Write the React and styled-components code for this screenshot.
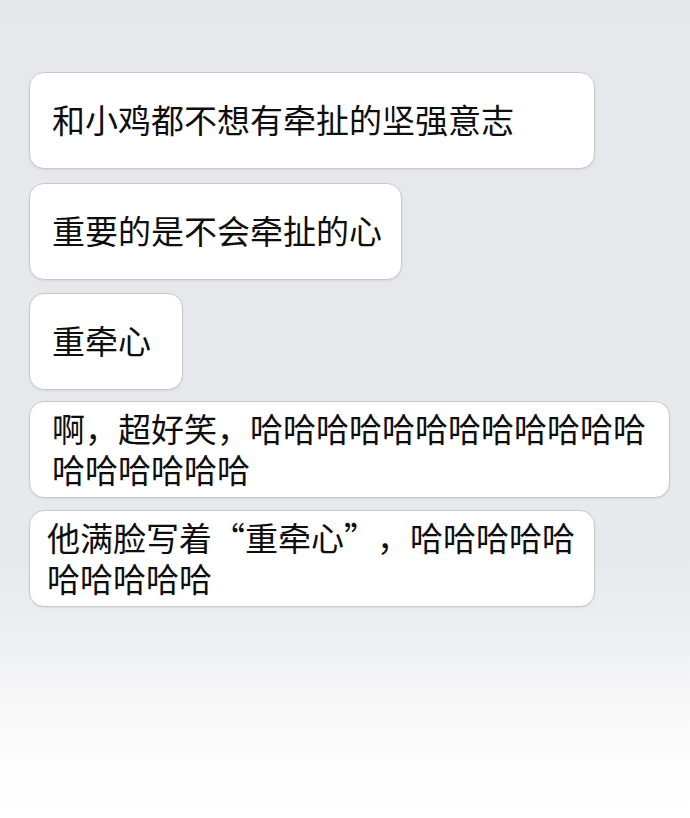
import React from "react";
import styled, { createGlobalStyle } from "styled-components";

const GlobalStyle = createGlobalStyle`
  html, body {
    margin: 0;
    padding: 0;
  }
  body {
    font-family: "Noto Sans CJK SC", "Noto Sans", sans-serif;
    background: #ffffff;
  }
`;

const Page = styled.main`
  box-sizing: border-box;
  width: 690px;
  min-height: 818px;
  padding: 72px 0 0 29px;
  display: flex;
  flex-direction: column;
  align-items: flex-start;
  background: linear-gradient(
    to bottom,
    #e6e7eb 0px,
    #e8e9ec 560px,
    #eeeff1 640px,
    #f7f7f8 700px,
    #fcfcfc 760px,
    #ffffff 818px
  );
`;

const Bubble = styled.div`
  box-sizing: border-box;
  width: ${(p) => p.$w}px;
  min-height: 97px;
  margin-top: ${(p) => p.$mt || 0}px;
  padding: 0 12px 0 ${(p) => p.$pl || 22}px;
  display: flex;
  align-items: center;
  background: #ffffff;
  border: 1px solid #c9c9cb;
  border-radius: 15px;
  box-shadow: 0 1px 2px rgba(0, 0, 0, 0.08);
`;

const Text = styled.p`
  margin: 0;
  margin-top: -2px;
  font-family: "Noto Sans CJK SC", sans-serif;
  font-size: 33px;
  line-height: 41px;
  color: #0e0e0e;
  white-space: pre-line;
  letter-spacing: 0;
  text-spacing-trim: space-all;
`;

const messages = [
  { text: "和小鸡都不想有牵扯的坚强意志", w: 566, mt: 0 },
  { text: "重要的是不会牵扯的心", w: 373, mt: 14 },
  { text: "重牵心", w: 154, mt: 13 },
  {
    text: "啊，超好笑，哈哈哈哈哈哈哈哈哈哈哈哈\n哈哈哈哈哈哈",
    w: 641,
    mt: 11,
  },
  {
    text: "他满脸写着“重牵心”，哈哈哈哈哈\n哈哈哈哈哈",
    w: 566,
    mt: 12,
    pl: 17,
  },
];

export default function App() {
  return (
    <>
      <GlobalStyle />
      <Page lang="zh-CN">
        {messages.map((m, i) => (
          <Bubble key={i} $w={m.w} $mt={m.mt} $pl={m.pl}>
            <Text>{m.text}</Text>
          </Bubble>
        ))}
      </Page>
    </>
  );
}
